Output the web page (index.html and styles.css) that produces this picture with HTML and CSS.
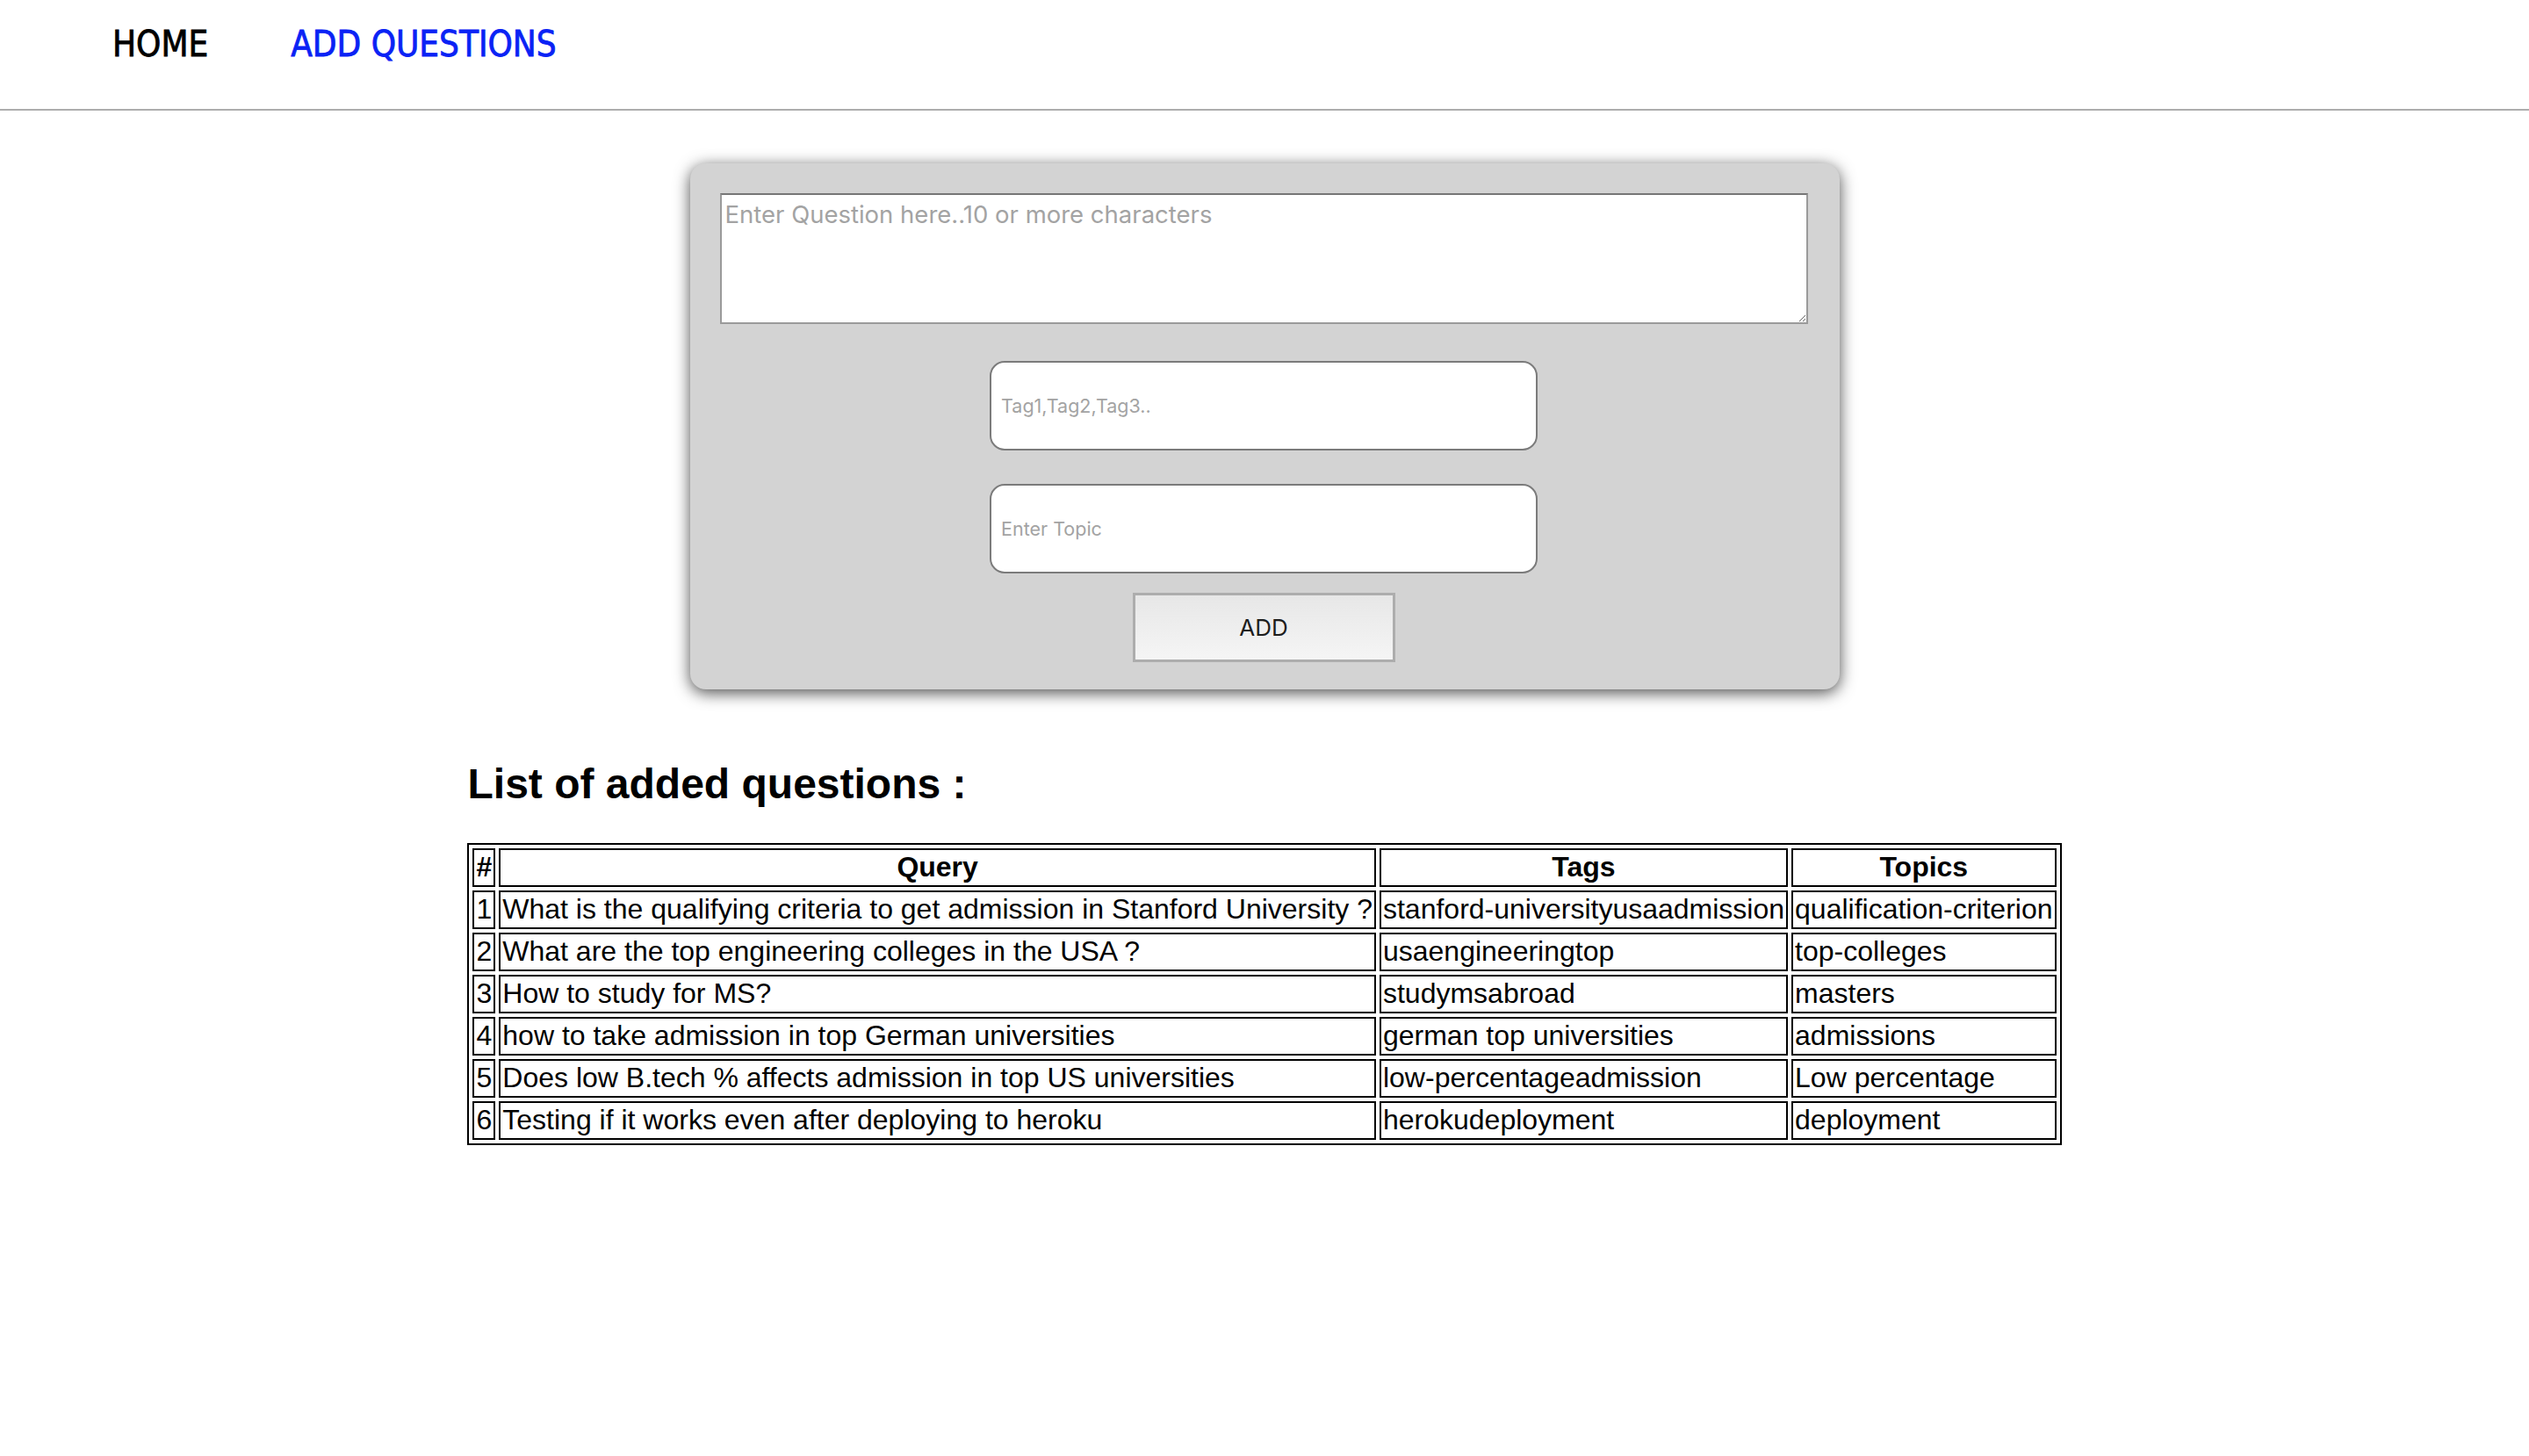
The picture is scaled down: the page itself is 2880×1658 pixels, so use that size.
FILE: index.html
```html
<!DOCTYPE html>
<html lang="en">
<head>
<meta charset="utf-8">
<title>Add Questions</title>
<link rel="stylesheet" href="styles.css">
</head>
<body>
<nav class="nav">
  <a class="nav-link" href="#">HOME</a>
  <a class="nav-link nav-link-active" href="#">ADD QUESTIONS</a>
</nav>

<main class="main">
  <form class="card">
    <textarea class="question" placeholder="Enter Question here..10 or more characters"></textarea>
    <input class="field field-tags" type="text" placeholder="Tag1,Tag2,Tag3..">
    <input class="field field-topic" type="text" placeholder="Enter Topic">
    <button class="add-btn" type="button">ADD</button>
  </form>

  <section class="list">
    <h2 class="list-title">List of added questions :</h2>
    <table class="qtable">
      <thead>
        <tr><th>#</th><th>Query</th><th>Tags</th><th>Topics</th></tr>
      </thead>
      <tbody>
        <tr><td>1</td><td>What is the qualifying criteria to get admission in Stanford University ?</td><td>stanford-universityusaadmission</td><td>qualification-criterion</td></tr>
        <tr><td>2</td><td>What are the top engineering colleges in the USA ?</td><td>usaengineeringtop</td><td>top-colleges</td></tr>
        <tr><td>3</td><td>How to study for MS?</td><td>studymsabroad</td><td>masters</td></tr>
        <tr><td>4</td><td>how to take admission in top German universities</td><td>german top universities</td><td>admissions</td></tr>
        <tr><td>5</td><td>Does low B.tech % affects admission in top US universities</td><td>low-percentageadmission</td><td>Low percentage</td></tr>
        <tr><td>6</td><td>Testing if it works even after deploying to heroku</td><td>herokudeployment</td><td>deployment</td></tr>
      </tbody>
    </table>
  </section>
</main>
</body>
</html>
```

FILE: styles.css
```css
html, body {
  margin: 0;
  padding: 0;
  background: #ffffff;
}

body {
  font-family: "Liberation Sans", Arial, sans-serif;
  color: #000;
}

/* ---------- nav ---------- */
.nav {
  display: flex;
  align-items: flex-start;
  gap: 94px;
  padding: 27px 0 50px 128px;
  border-bottom: 2px solid #adadad;
}

.nav-link {
  font-family: "DejaVu Sans Condensed", "DejaVu Sans", sans-serif;
  font-size: 40px;
  line-height: 47px;
  color: #000;
  text-decoration: none;
  -webkit-text-stroke: 0.8px currentColor;
}

.nav-link-active {
  color: #0a22f5;
}

/* ---------- form card ---------- */
.main {
  display: flex;
  flex-direction: column;
  align-items: center;
}

.card {
  box-sizing: border-box;
  width: 1309px;
  margin: 60px 0 0;
  padding: 34px 36px 31px 34px;
  background: #d3d3d3;
  border-radius: 18px;
  box-shadow: 0 4px 18px rgba(0, 0, 0, 0.7);
  display: flex;
  flex-direction: column;
  align-items: center;
}

.question {
  box-sizing: border-box;
  align-self: stretch;
  height: 149px;
  margin: 0;
  padding: 5px 4px 4px;
  border: 2px solid #9a9a9a;
  border-top-color: #767676;
  background: #fff;
  font-family: "Inter", "Liberation Sans", sans-serif;
  font-size: 27.5px;
  color: #000;
  resize: both;
}

.question::placeholder {
  color: #a3a3a3;
}

.field {
  box-sizing: border-box;
  width: 624px;
  height: 102px;
  margin: 42px 0 0;
  padding: 0 11px;
  border: 2px solid #7b7b7b;
  border-radius: 17px;
  background: #fff;
  font-family: "Inter", "Liberation Sans", sans-serif;
  font-size: 21.5px;
  color: #000;
  outline: none;
}

.field-topic {
  margin-top: 38px;
}

.field::placeholder {
  color: #a3a3a3;
}

.add-btn {
  box-sizing: border-box;
  width: 299px;
  height: 79px;
  margin: 22px 0 0;
  padding: 0;
  border: 3px solid #adadad;
  background: linear-gradient(#e7e7e7, #f5f5f5);
  font-family: "Inter", "Liberation Sans", sans-serif;
  font-size: 26px;
  color: #1d1d1d;
  cursor: pointer;
}

/* ---------- list ---------- */
.list {
  width: fit-content;
  margin: 40px auto;
}

.list-title {
  margin: 41px 0 40px;
  font-size: 48px;
  font-weight: bold;
  line-height: 54px;
}

.qtable {
  border: 2px solid #000;
  border-spacing: 4px;
  font-size: 32px;
  line-height: 36px;
}

.qtable th,
.qtable td {
  border: 2px solid #000;
  padding: 1px 2px 3px;
  white-space: nowrap;
}

.qtable th {
  font-weight: bold;
  text-align: center;
}

.qtable td {
  text-align: left;
}
```
